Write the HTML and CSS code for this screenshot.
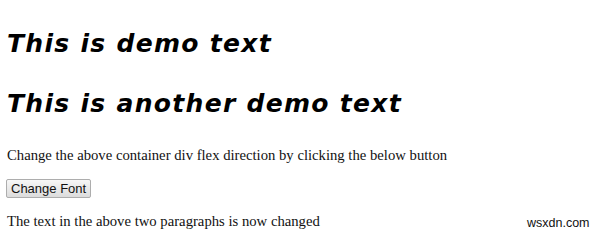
FILE: index.html
```
<html><head>
<meta charset="utf-8">
<title>Change Font</title>
<link rel="stylesheet" href="styles.css">
</head>

<body>
<div class="container">
  <p class="demo">This is demo text</p>
  <p class="demo">This is another demo text</p>
</div>

<p class="info">Change the above container div flex direction by clicking the below button</p>

<button class="btn">Change Font</button>

<p class="info result">The text in the above two paragraphs is now changed</p>

<span class="mark">wsxdn.com</span>
</body></html>
```

FILE: styles.css
```
body {
  margin: 0;
  padding: 29px 0 0 7px;
  font-family: "Liberation Serif", serif;
  color: #111;
  background: #fff;
}

.container {
  display: flex;
  flex-direction: column;
  gap: 30px;
}

.demo {
  margin: 0;
  font: italic bold 25px/30px "DejaVu Sans", Verdana, sans-serif;
  letter-spacing: 1.3px;
  color: #000;
}

.info {
  margin: 27px 0 0 0;
  font-size: 14.7px;
  line-height: 18px;
}

.btn {
  display: block;
  margin: 15px 0 0 -1px;
  height: 19px;
  padding: 0 4px;
  font: 13px "Liberation Sans", Arial, sans-serif;
  color: #111;
  background: linear-gradient(#f7f7f7, #dcdcdc);
  border: 1px solid #adadad;
  border-radius: 2px;
}

.result {
  margin-top: 14px;
}

.mark {
  position: absolute;
  left: 527px;
  top: 216px;
  font: 12.5px/15px "Liberation Sans", Arial, sans-serif;
  color: #111;
}
```
